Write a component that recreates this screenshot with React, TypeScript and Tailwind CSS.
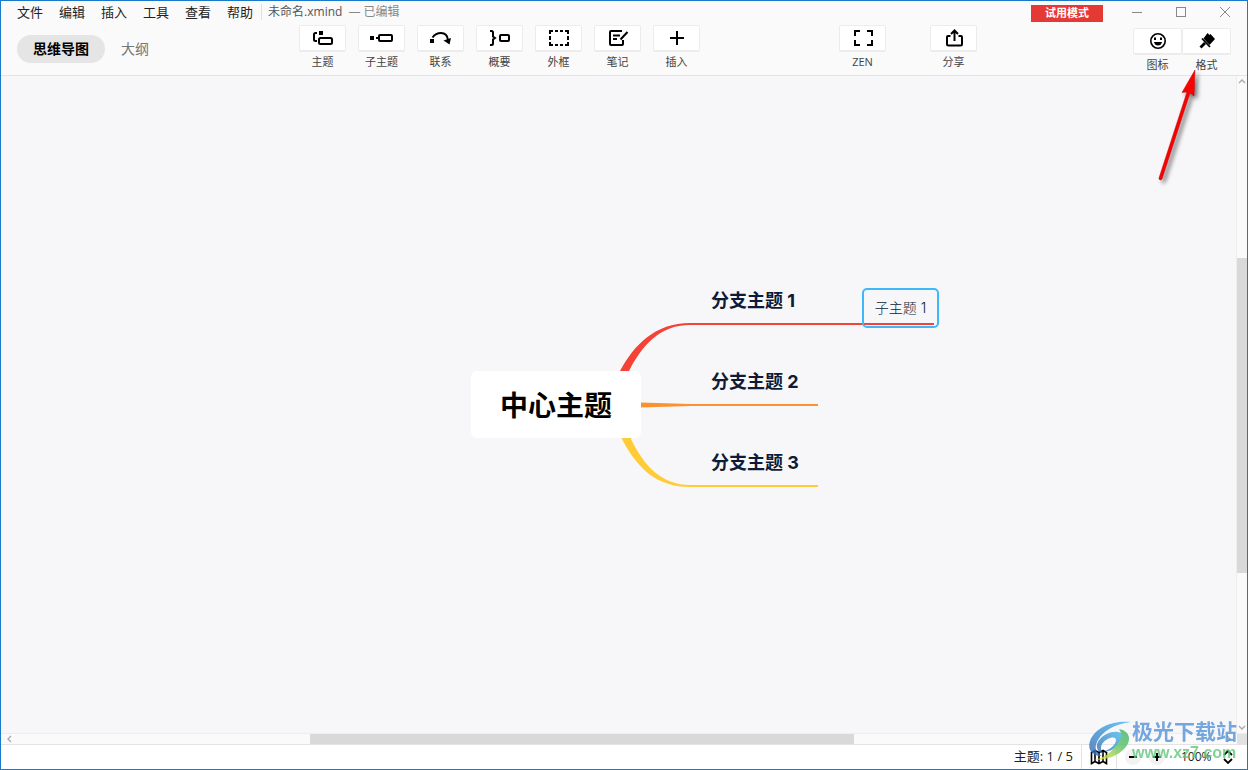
import React, { useState } from "react";

const menus = ["文件", "编辑", "插入", "工具", "查看", "帮助"];

const icons: Record<string, React.ReactNode> = {
  topic: (
    <>
      <path d="M6 4H4.500Q3 4 3 5.500v5Q3 12 4.500 12H6" />
      <rect x="8" y="2" width="4" height="4" fill="currentColor" stroke="none" />
      <rect x="8" y="9" width="13" height="6" rx="1.500" />
    </>
  ),
  subtopic: (
    <>
      <rect x="0" y="7" width="4" height="4" fill="currentColor" stroke="none" />
      <path d="M6 9h3" />
      <rect x="9" y="6" width="13" height="6" rx="1" />
    </>
  ),
  relation: (
    <>
      <rect x="1" y="10" width="4" height="4" fill="currentColor" stroke="none" />
      <path d="M3.500 8.500C6 5 9 4 12 4c4 0 6.500 2.500 7 7" />
      <path d="M14.500 11.500 22 9l-1.500 6.500z" fill="currentColor" stroke="none" />
    </>
  ),
  summary: (
    <>
      <path d="M2 2h1.500Q5 2 5 3.500v4L7 9l-2 1.500v4Q5 16 3.500 16H2" />
      <rect x="12" y="6" width="9" height="6" rx="1" />
    </>
  ),
  boundary: (
    <path d="M3 5V2h3M8 2h3M13 2h3M18 2h3v3M21 7v4M21 13v3h-3M16 16h-3M11 16H8M6 16H3v-3M3 11V7" />
  ),
  note: (
    <>
      <path d="M16 2H5Q4 2 4 3v12q0 1 1 1h11q1 0 1-1v-4" />
      <path d="M7 6.500h7M7 10h4M14.500 10.500 21.500 3" />
    </>
  ),
  insert: <path d="M12 2v14M5 9h14" />,
  zen: <path d="M4 7V2h5M16 2h5v5M21 11v5h-5M9 16H4v-5" />,
  share: (
    <>
      <path d="M8.500 7H6Q5 7 5 8v7q0 1.500 1.500 1.500h12Q20 16.500 20 15V8q0-1-1-1h-2.500" />
      <path d="M12.500 12V1.500M9 5l3.500-3.500L16 5" />
    </>
  ),
  smile: (
    <>
      <circle cx="12" cy="9" r="7.200" strokeWidth="1.600" />
      <path d="M8 5.500h2V8H8zM14 5.500h2V8h-2z" fill="currentColor" stroke="none" />
      <path d="M8 10h8q-.8 3.500-4 3.500T8 10z" fill="currentColor" stroke="none" />
    </>
  ),
  brush: (
    <>
      <path
        d="M12.500 1 14.500 3 15.500 2 20 7l-5.500 6L8.500 6.500z"
        fill="currentColor"
        stroke="none"
      />
      <path d="m7 6.500 8 8.500" strokeWidth="1.800" />
      <path d="M10 11 5.500 15.500" strokeWidth="2.800" />
    </>
  ),
};

const Icon = ({ name }: { name: string }) => (
  <svg
    width="24"
    height="18"
    viewBox="0 0 24 18"
    fill="none"
    stroke="currentColor"
    strokeWidth="2"
    aria-hidden="true"
  >
    {icons[name]}
  </svg>
);

const ToolButton = ({ icon, label, wide }: { icon: string; label: string; wide?: boolean }) => (
  <button
    className={`flex shrink-0 flex-col items-center gap-0.5 text-[11px] leading-4 text-[#444] ${wide ? "w-[49px]" : "w-[47px]"}`}
  >
    <span className="flex h-[27px] w-full items-center justify-center rounded-xs border border-b-2 border-[#ececec] bg-white text-black">
      <Icon name={icon} />
    </span>
    {label}
  </button>
);

const mainTools = [
  { icon: "topic", label: "主题" },
  { icon: "subtopic", label: "子主题" },
  { icon: "relation", label: "联系" },
  { icon: "summary", label: "概要" },
  { icon: "boundary", label: "外框" },
  { icon: "note", label: "笔记" },
  { icon: "insert", label: "插入" },
];

const TitleBar = () => (
  <div className="flex h-[22px] items-center pr-4 pl-4">
    <nav className="flex gap-4">
      {menus.map((menu) => (
        <button key={menu} className="shrink-0 text-[13px] leading-5 text-[#222]">
          {menu}
        </button>
      ))}
    </nav>
    <div className="ml-2 flex items-center gap-1.5 border-l border-[#e0e0e0] pl-1.5 text-xs leading-4 whitespace-nowrap text-[#555]">
      <span>未命名.xmind</span>
      <span className="text-[#888]">— 已编辑</span>
    </div>
    <button className="mt-0.5 ml-auto h-[17px] w-[72px] shrink-0 bg-[#e53935] text-[11px] leading-4 font-bold text-white">
      试用模式
    </button>
    <div className="ml-7 flex shrink-0 gap-8 text-[#888]">
      <button aria-label="最小化">
        <svg width="12" height="12" viewBox="0 0 12 12" stroke="currentColor">
          <path d="M1 6.500h10" />
        </svg>
      </button>
      <button aria-label="最大化">
        <svg width="12" height="12" viewBox="0 0 12 12" stroke="currentColor" fill="none">
          <rect x="1.500" y="1.500" width="9" height="9" />
        </svg>
      </button>
      <button aria-label="关闭">
        <svg width="12" height="12" viewBox="0 0 12 12" stroke="currentColor">
          <path d="m1 1 10 10M11 1 1 11" />
        </svg>
      </button>
    </div>
  </div>
);

const Toolbar = () => {
  const [view, setView] = useState("map");
  const active = "bg-[#e5e5e5] font-bold text-black";
  return (
    <div className="flex h-[52px] items-start pt-0.5 pr-4 pl-4">
      <div className="flex w-[282px] shrink-0 items-center pt-2.5 text-sm">
        <button
          onClick={() => setView("map")}
          className={`h-7 rounded-full px-4 ${view === "map" ? active : "text-[#777]"}`}
        >
          思维导图
        </button>
        <button
          onClick={() => setView("outline")}
          className={`h-7 rounded-full px-4 ${view === "outline" ? active : "text-[#777]"}`}
        >
          大纲
        </button>
      </div>
      <div className="flex gap-3">
        {mainTools.map((tool) => (
          <ToolButton key={tool.icon} {...tool} />
        ))}
      </div>
      <div className="ml-[139px] flex gap-11">
        <ToolButton icon="zen" label="ZEN" />
        <ToolButton icon="share" label="分享" />
      </div>
      <div className="ml-auto flex pt-[3px]">
        <ToolButton icon="smile" label="图标" wide />
        <ToolButton icon="brush" label="格式" wide />
      </div>
    </div>
  );
};

const MindMap = () => (
  <div className="absolute top-[212px] left-[470px] h-[200px] w-[470px] font-bold whitespace-nowrap text-[#0d1b36]">
    <svg className="absolute" width="470" height="200" viewBox="471 288 470 200">
      <path
        d="M619 373 620 371C634 345 655 323 690 323H934V325H690C659 325 642 346 629 371V373z"
        fill="#f44336"
      />
      <path d="M640 402.500 691 404H818V406H691L640 407.500z" fill="#fb9230" />
      <path
        d="M621 437 622 439C638 470 658 487 690 487H818V485H690C662 485 644 466 631 439V437z"
        fill="#ffcb36"
      />
    </svg>
    <div className="absolute top-[83px] left-0 flex h-[67px] w-[170px] items-center justify-center rounded-md bg-white text-[28px] leading-10 text-black">
      中心主题
    </div>
    <div className="absolute top-px left-[240px] font-[Inter,'Noto_Sans_CJK_SC',sans-serif] text-lg leading-6">
      分支主题 1
    </div>
    <div className="absolute top-[82px] left-[240px] font-[Inter,'Noto_Sans_CJK_SC',sans-serif] text-lg leading-6">
      分支主题 2
    </div>
    <div className="absolute top-[163px] left-[240px] font-[Inter,'Noto_Sans_CJK_SC',sans-serif] text-lg leading-6">
      分支主题 3
    </div>
    <div className="absolute top-0 left-[391px] flex h-10 w-[77px] items-center justify-center rounded-[5px] border-2 border-[#3db8fb] font-[Inter,'Noto_Sans_CJK_SC',sans-serif] text-sm font-light">
      子主题 1
    </div>
  </div>
);

const StatusBar = () => (
  <footer className="flex h-[25px] shrink-0 items-center justify-end border-t border-[#e4e4e4] bg-white pr-3.5 text-[13px] text-[#222]">
    <span className="pr-2">主题: 1 / 5</span>
    <button aria-label="导航" className="flex h-full w-9 items-center justify-center border-x border-[#e4e4e4]">
      <svg width="18" height="16" viewBox="0 0 18 16" fill="none" stroke="black" strokeWidth="1.600">
        <path d="M1.500 3.500 5 1.500l4 2 4-2 3.500 2v11l-3.500-2-4 2-4-2-3.500 2zM5 1.500v11M9 3.500v11M13 1.500v11" />
      </svg>
    </button>
    <div className="ml-2 flex gap-2">
      <button aria-label="缩小" className="flex size-4 items-center justify-center rounded-full bg-[#f2f2f2]">
        <svg width="10" height="10" viewBox="0 0 10 10" stroke="black" strokeWidth="2">
          <path d="M1 5h8" />
        </svg>
      </button>
      <button aria-label="放大" className="flex size-4 items-center justify-center rounded-full bg-[#f2f2f2]">
        <svg width="10" height="10" viewBox="0 0 10 10" stroke="black" strokeWidth="2">
          <path d="M1 5h8M5 1v8" />
        </svg>
      </button>
    </div>
    <label className="ml-4 flex items-center">
      <select aria-label="缩放比例" className="w-[42px] appearance-none bg-transparent text-xs">
        <option>100%</option>
      </select>
      <svg width="10" height="16" viewBox="0 0 10 16" fill="none" stroke="black" strokeWidth="1.800">
        <path d="m1 6 4-4 4 4M1 10l4 4 4-4" />
      </svg>
    </label>
  </footer>
);

const Pointer = () => (
  <svg
    className="pointer-events-none absolute top-[67px] right-[42px] drop-shadow-[3px_3px_2px_rgba(0,0,0,0.5)]"
    width="50"
    height="120"
    viewBox="1155 68 50 120"
  >
    <path
      d="M1195 70 1194 96 1190 93 1162 179q-1.500 2-3 0v-1L1187 92 1182 92.500z"
      fill="#fb0000"
      stroke="#c00000"
      strokeWidth="0.500"
    />
  </svg>
);

const Watermark = () => (
  <div className="pointer-events-none absolute right-2.5 bottom-1.5 flex items-center opacity-80">
    <svg width="44" height="42" viewBox="0 0 44 42">
      <defs>
        <linearGradient id="sky" x1="0" y1="1" x2="1" y2="0">
          <stop offset="0" stopColor="#3568b5" />
          <stop offset="1" stopColor="#45bdf0" />
        </linearGradient>
        <linearGradient id="leaf" x1="1" y1="0" x2="0" y2="1">
          <stop offset="0" stopColor="#35b36b" />
          <stop offset="0.400" stopColor="#5cc069" />
          <stop offset="0.850" stopColor="#d7e33c" />
        </linearGradient>
      </defs>
      <path
        d="M43 2C26 0 7 7 2 21c-3 9 3 16 12 15-7-3-8-9-4-16C15 11 26 4 43 2z"
        fill="url(#sky)"
      />
      <path
        d="M9 24c3-8 13-13 21-12 6 1 6 6 2 11-4 6-11 9-15 8 6-2 11-7 11-11 0-5-10-2-14 4-2 4-1 8 2 10-5-1-8-5-7-10z"
        fill="url(#sky)"
      />
      <path
        d="M31 9C42 11 44 20 37 28 30 36 19 40 6 40c9-2 15-6 20-12 7-7 9-13 5-19z"
        fill="url(#leaf)"
      />
    </svg>
    <div className="flex flex-col whitespace-nowrap">
      <span className="text-[21px] leading-6 font-bold text-[#5592d6]">极光下载站</span>
      <span className="font-['Liberation_Sans',sans-serif] text-base leading-5 font-bold text-[#5fc87c]">
        www.xz7.com
      </span>
    </div>
  </div>
);

const Chevron = ({ d }: { d: string }) => (
  <svg width="8" height="8" viewBox="0 0 8 8" fill="none" stroke="#aaa" strokeWidth="1.400">
    <path d={d} />
  </svg>
);

export default function App() {
  return (
    <div className="relative flex h-screen flex-col overflow-hidden border border-[#1979ca] bg-[#f7f7fa] font-['Open_Sans','Noto_Sans_CJK_SC',sans-serif]">
      <header className="shrink-0 border-b border-[#e4e4e6] bg-[#fafafa]">
        <TitleBar />
        <Toolbar />
      </header>
      <div className="flex min-h-0 flex-1">
        <main className="relative min-w-0 flex-1 overflow-hidden">
          <MindMap />
        </main>
        <div className="flex w-[11px] shrink-0 flex-col items-center justify-between border-l border-[#ededed] bg-[#fafafa] py-px">
          <Chevron d="m1 6 3-3 3 3" />
          <div className="mt-[22px] h-[48%] w-full bg-[#d9d9d9]" />
          <Chevron d="m1 2 3 3 3-3" />
        </div>
      </div>
      <div className="flex h-[11px] shrink-0 items-center border-t border-[#ededed] bg-[#fafafa]">
        <div className="flex w-full items-center justify-between px-1">
          <Chevron d="M6 1 3 4l3 3" />
          <div className="mr-[74px] h-[10px] w-[544px] bg-[#d9d9d9]" />
          <Chevron d="m2 1 3 3-3 3" />
        </div>
        <div className="h-full w-[10px] shrink-0 bg-[#e2e2e2]" />
      </div>
      <StatusBar />
      <Watermark />
      <Pointer />
    </div>
  );
}
